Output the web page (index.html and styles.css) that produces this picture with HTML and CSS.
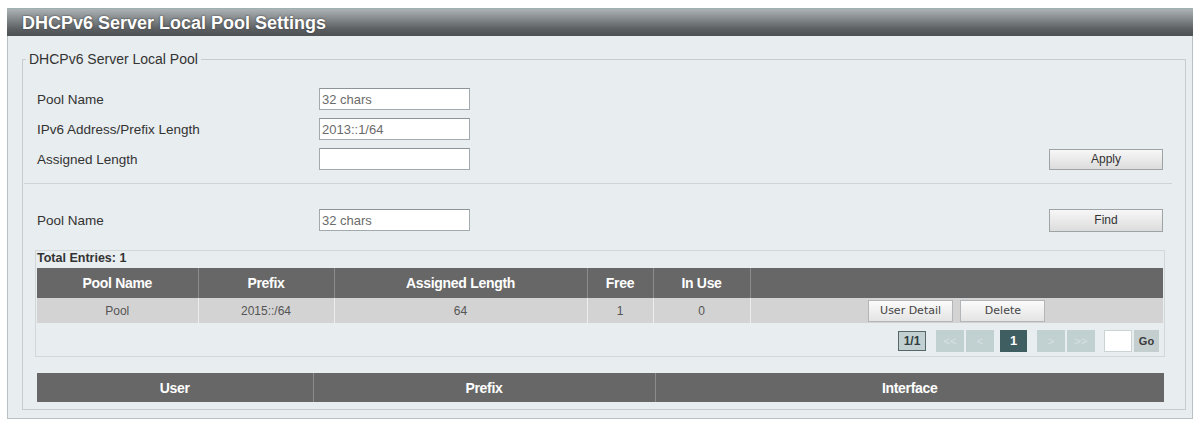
FILE: index.html
```html
<!DOCTYPE html>
<html lang="en">
<head>
    <meta charset="UTF-8">
    <title>DHCPv6 Server Local Pool Settings</title>
    <link rel="stylesheet" href="styles.css">
</head>
<body>
    <div class="panel">
        <div class="panel-title">DHCPv6 Server Local Pool Settings</div>

        <div class="panel-body">
            <fieldset>
                <legend>DHCPv6 Server Local Pool</legend>

                <div class="form-row">
                    <label>Pool Name</label>
                    <input type="text" value="32 chars">
                </div>
                <div class="form-row">
                    <label>IPv6 Address/Prefix Length</label>
                    <input type="text" value="2013::1/64">
                </div>
                <div class="form-row">
                    <label>Assigned Length</label>
                    <input type="text" value="">
                    <button class="btn">Apply</button>
                </div>

                <div class="divider"></div>

                <div class="form-row find-row">
                    <label>Pool Name</label>
                    <input type="text" value="32 chars">
                    <button class="btn">Find</button>
                </div>

                <div class="entries-box">
                    <div class="entries-title">Total Entries: 1</div>
                    <table class="data-table">
                        <colgroup>
                            <col style="width: 161px">
                            <col style="width: 136px">
                            <col style="width: 253px">
                            <col style="width: 66px">
                            <col style="width: 97px">
                            <col>
                        </colgroup>
                        <tr>
                            <th>Pool Name</th>
                            <th>Prefix</th>
                            <th>Assigned Length</th>
                            <th>Free</th>
                            <th>In Use</th>
                            <th></th>
                        </tr>
                        <tr>
                            <td>Pool</td>
                            <td>2015::/64</td>
                            <td>64</td>
                            <td>1</td>
                            <td>0</td>
                            <td class="actions">
                                <button class="btn-small">User Detail</button>
                                <button class="btn-small">Delete</button>
                            </td>
                        </tr>
                    </table>

                    <div class="pager">
                        <span class="page-count">1/1</span>
                        <span class="page-btn first">&lt;&lt;</span>
                        <span class="page-btn pair">&lt;</span>
                        <span class="page-btn current">1</span>
                        <span class="page-btn next">&gt;</span>
                        <span class="page-btn pair">&gt;&gt;</span>
                        <input type="text" class="page-input">
                        <span class="go-btn">Go</span>
                    </div>
                </div>

                <table class="data-table user-table">
                    <colgroup>
                        <col style="width: 276px">
                        <col style="width: 342px">
                        <col>
                    </colgroup>
                    <tr>
                        <th>User</th>
                        <th>Prefix</th>
                        <th>Interface</th>
                    </tr>
                </table>
            </fieldset>
        </div>
    </div>
</body>
</html>
```

FILE: styles.css
```css
body {
    margin: 0;
    background: #fff;
    font-family: 'Liberation Sans', Arial, sans-serif;
    font-size: 13.5px;
    color: #333;
}
.panel {
    margin: 8px 0 0 7px;
    width: 1184px;
    border: 1px solid #b8c1c4;
    border-top: none;
    background: #e8edef;
}
.panel-title {
    height: 28px;
    line-height: 28px;
    margin: 0 -1px;
    padding-left: 15px;
    color: #fff;
    font-size: 18px;
    font-weight: bold;
    text-shadow: 0 0 2px #333;
    background: linear-gradient(#adb2b4 0%, #868b8e 35%, #5b5f62 75%, #4e5153 100%);
    border-top: 1px solid #9fb0b2;
    box-sizing: border-box;
}
.panel-body {
    padding: 16px 6px 8px 14px;
}
fieldset {
    margin: 0;
    padding: 21px 22px 7px 14px;
    border: 1px solid #c6cccf;
    min-width: 0;
}
legend {
    margin-left: -11px;
    padding: 0 3px;
    font-size: 14px;
    line-height: 15px;
    color: #333;
}
.form-row {
    display: flex;
    align-items: center;
    height: 22px;
    margin-bottom: 8px;
}
.form-row label {
    width: 282px;
    flex: none;
}
.form-row input {
    width: 151px;
    height: 22px;
    box-sizing: border-box;
    border: 1px solid #a3aaad;
    border-top-color: #8d9497;
    padding: 0 2px;
    font-family: inherit;
    font-size: 13px;
    color: #6b6b6b;
    background: #fff;
}
.btn {
    margin-left: auto;
    width: 114px;
    height: 21px;
    border: 1px solid #9ea3a6;
    background: linear-gradient(#f7f7f7, #dcdcdc);
    font-family: inherit;
    font-size: 12px;
    color: #333;
    padding: 0;
}
.divider {
    height: 1px;
    background: #cfd4d6;
    margin: 13px -9px 0 -13px;
}
.find-row {
    margin-top: 25px;
    margin-bottom: 0;
}
.find-row .btn {
    height: 23px;
}
.entries-box {
    margin: 19px -2px 0 -2px;
    padding: 0 1px 4px 1px;
    border: 1px solid #d2d7d9;
}
.entries-title {
    font-size: 12.5px;
    font-weight: bold;
    line-height: 15px;
    margin-bottom: 2px;
}
.data-table {
    width: 100%;
    border-collapse: collapse;
    table-layout: fixed;
}
.data-table th {
    height: 30px;
    padding: 0;
    background: #676767;
    color: #fff;
    font-size: 14px;
    font-weight: bold;
    letter-spacing: -0.3px;
    text-align: center;
    border-left: 1px solid #8c8c8c;
}
.data-table th:first-child,
.data-table td:first-child {
    border-left: none;
}
.data-table td {
    height: 25px;
    padding: 0;
    background: #d3d3d3;
    color: #555;
    font-size: 12px;
    text-align: center;
    border-left: 1px solid #eceeee;
}
.actions {
    font-size: 0;
}
.btn-small {
    width: 85px;
    height: 22px;
    margin: 0 2px;
    border: 1px solid #b3b6b8;
    background: linear-gradient(#fbfbfb, #e4e4e4);
    font-family: 'DejaVu Sans', sans-serif;
    font-size: 11px;
    color: #444;
    padding: 0;
}
.pager {
    display: flex;
    justify-content: flex-end;
    align-items: center;
    height: 22px;
    margin-top: 7px;
    padding-right: 4px;
}
.page-count {
    width: 28px;
    height: 20px;
    box-sizing: border-box;
    border: 1px solid #566769;
    background: #c3d0d1;
    color: #2f3d3f;
    font-size: 12px;
    font-weight: bold;
    line-height: 18px;
    text-align: center;
}
.page-btn {
    width: 28px;
    height: 22px;
    line-height: 22px;
    background: #c1d1d2;
    color: #d7e2e3;
    font-size: 11px;
    text-align: center;
}
.page-btn.first {
    margin-left: 10px;
}
.page-btn.pair {
    margin-left: 2px;
}
.page-btn.current {
    margin-left: 6px;
    width: 27px;
    background: #3f5e61;
    color: #fff;
    font-weight: bold;
    font-size: 13px;
}
.page-btn.next {
    margin-left: 10px;
}
.page-input {
    margin-left: 9px;
    width: 28px;
    height: 22px;
    box-sizing: border-box;
    border: 1px solid #ccd3d4;
    background: #fff;
    padding: 0;
}
.go-btn {
    margin-left: 2px;
    width: 25px;
    height: 22px;
    line-height: 22px;
    background: #c5cecf;
    color: #3a3a3a;
    font-size: 11px;
    font-weight: bold;
    text-align: center;
}
.user-table {
    margin-top: 16px;
    width: calc(100% + 1px);
}
.user-table th {
    height: 29px;
}
```
